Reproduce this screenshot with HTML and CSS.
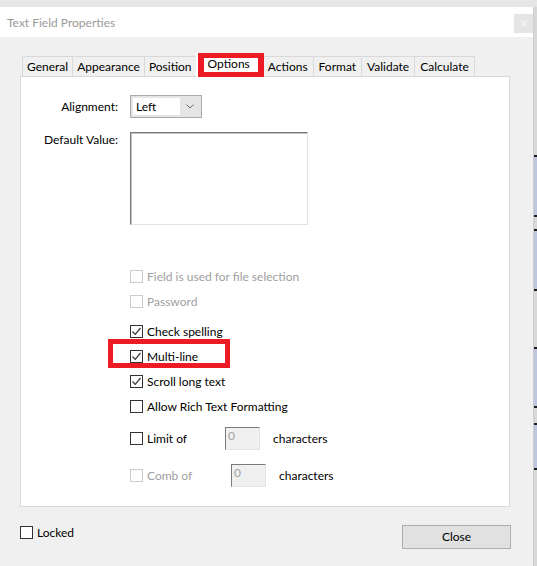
FILE: index.html
```html
<!DOCTYPE html>
<html lang="en">
<head>
<meta charset="utf-8">
<title>Text Field Properties</title>
<link rel="stylesheet" href="styles.css">
</head>
<body>
<div class="screen">
  <div class="dialog">
    <div class="titlebar">
      <span class="title">Text Field Properties</span>
      <span class="close-x">×</span>
    </div>
    <div class="content">
      <div class="tabs">
        <div class="tab">General</div>
        <div class="tab">Appearance</div>
        <div class="tab">Position</div>
        <div class="tab active">Options<span class="tab-mark"></span></div>
        <div class="tab">Actions</div>
        <div class="tab">Format</div>
        <div class="tab">Validate</div>
        <div class="tab">Calculate</div>
      </div>
      <div class="panel">
        <div class="form-grid">
          <div class="label label-mid">Alignment:</div>
          <div class="select">
            <span class="select-value">Left</span>
            <span class="select-arrow">
              <svg width="8" height="5" viewBox="0 0 8 5"><polyline points="0.5,0.5 4,4 7.5,0.5" fill="none" stroke="#6d6d6d" stroke-width="1"/></svg>
            </span>
          </div>
          <div class="label label-top">Default Value:</div>
          <div class="textarea"></div>
        </div>
        <div class="checks">
          <div class="check-row disabled"><span class="box"></span><span>Field is used for file selection</span></div>
          <div class="check-row disabled"><span class="box"></span><span>Password</span></div>
          <div class="check-row gap-top"><span class="box"><svg width="11" height="11" viewBox="0 0 11 11"><polyline points="1.5,5.5 4.2,8.3 9.5,2" fill="none" stroke="#333" stroke-width="1.2"/></svg></span><span>Check spelling</span></div>
          <div class="check-row"><span class="box"><svg width="11" height="11" viewBox="0 0 11 11"><polyline points="1.5,5.5 4.2,8.3 9.5,2" fill="none" stroke="#333" stroke-width="1.2"/></svg></span><span>Multi-line</span><span class="mark-box"></span></div>
          <div class="check-row"><span class="box"><svg width="11" height="11" viewBox="0 0 11 11"><polyline points="1.5,5.5 4.2,8.3 9.5,2" fill="none" stroke="#333" stroke-width="1.2"/></svg></span><span>Scroll long text</span></div>
          <div class="check-row"><span class="box"></span><span>Allow Rich Text Formatting</span></div>
          <div class="check-row limit-row">
            <span class="box"></span><span class="inline-label limit-label">Limit of</span>
            <span class="num-input">0</span><span class="unit">characters</span>
          </div>
          <div class="check-row comb-row">
            <span class="box disabled-box"></span><span class="inline-label comb-label disabled-text">Comb of</span>
            <span class="num-input">0</span><span class="unit">characters</span>
          </div>
        </div>
      </div>
      <div class="footer">
        <div class="check-row locked"><span class="box"></span><span>Locked</span></div>
        <div class="button">Close</div>
      </div>
    </div>
  </div>
  <div class="side">
    <div class="side-block b1"></div>
    <div class="side-block b2"></div>
    <div class="side-block b3"></div>
    <div class="side-block b4"></div>
  </div>
</div>
</body>
</html>
```

FILE: styles.css
```css
* { box-sizing: border-box; }

body {
  margin: 0;
  background: #e6e6e6;
  font-family: Lato, "Noto Sans", sans-serif;
  font-size: 12px;
  color: #000;
}

.screen {
  display: flex;
  height: 566px;
  padding-top: 7px;
  overflow: hidden;
}

.dialog {
  width: 533px;
  height: 559px;
  flex: none;
  background: #f0f0f0;
  display: flex;
  flex-direction: column;
}

.titlebar {
  height: 30px;
  background: #fff;
  display: flex;
  justify-content: space-between;
  align-items: center;
  padding-left: 7px;
}

.title {
  color: #9a9a9a;
  font-size: 12px;
}

.close-x {
  align-self: flex-start;
  margin-top: 7px;
  width: 19px;
  height: 19px;
  background: #e5e5e5;
  color: #f8f8f8;
  font-size: 13px;
  line-height: 18px;
  text-align: center;
}

.content {
  padding: 19px 23px 0 20px;
}

.tabs {
  display: flex;
  align-items: flex-end;
  height: 20px;
  padding-left: 2px;
}

.tab {
  height: 20px;
  border: 1px solid #d9d9d9;
  border-bottom: 0;
  background: #f0f0f0;
  padding: 0 4px;
  display: flex;
  align-items: center;
  margin-left: -1px;
}

.tab:first-child { margin-left: 0; }

.tab.active ~ .tab { padding: 0 5px; }

.tab.active {
  position: relative;
  z-index: 2;
  height: 24px;
  margin-bottom: -1px;
  padding: 0 12px 4px 11px;
  background: #fff;
  border-color: #fff;
}

.tab-mark {
  position: absolute;
  left: 1px;
  right: -2px;
  top: -1px;
  bottom: 0;
  border: 5px solid #ed1c24;
  border-left-width: 6px;
  border-right-width: 6px;
}

.panel {
  width: 490px;
  height: 431px;
  background: #fff;
  border: 1px solid #d9d9d9;
  padding-top: 18px;
}

.form-grid {
  display: grid;
  grid-template-columns: 97px 178px;
  column-gap: 12px;
  row-gap: 14px;
}

.label { text-align: right; }
.label-mid { align-self: center; }
.label-top { line-height: 15px; }

.select {
  width: 72px;
  height: 23px;
  border: 1px solid #a9a9a9;
  background: #e5e5e5;
  display: flex;
  padding: 2px;
}

.select-value {
  flex: 1;
  background: #fff;
  padding-left: 3px;
  line-height: 17px;
}

.select-arrow {
  width: 19px;
  display: flex;
  align-items: center;
  justify-content: center;
}

.textarea {
  width: 178px;
  height: 93px;
  background: #fff;
  border: 1px solid;
  border-color: #7a7a7a #e3e3e3 #e3e3e3 #7a7a7a;
  box-shadow: inset 1px 1px 0 #c4c4c4;
}

.checks {
  padding-left: 109px;
  margin-top: 39px;
}

.check-row {
  position: relative;
  display: flex;
  align-items: center;
  height: 25px;
}

.box {
  width: 13px;
  height: 13px;
  flex: none;
  border: 1px solid #333;
  background: #fff;
  margin-right: 4px;
  display: flex;
  align-items: center;
  justify-content: center;
}

.check-row.disabled { color: #a0a0a0; }
.check-row.disabled .box,
.disabled-box { border-color: #cccccc; }
.disabled-text { color: #a0a0a0; }

.gap-top { margin-top: 5px; }

.mark-box {
  position: absolute;
  left: -22px;
  top: -5px;
  width: 122px;
  height: 29px;
  border: 5px solid #ed1c24;
}

.limit-row { margin-top: 7px; }
.comb-row { margin-top: 12px; }

.inline-label { flex: none; }
.limit-label { width: 78px; }
.comb-label { width: 84px; }

.num-input {
  width: 35px;
  height: 23px;
  background: #f0f0f0;
  border: 1px solid;
  border-color: #7a7a7a #e3e3e3 #e3e3e3 #7a7a7a;
  color: #a0a0a0;
  padding: 1px 0 0 2px;
  line-height: 14px;
  align-self: center;
}

.unit { margin-left: 13px; }

.footer {
  display: flex;
  justify-content: space-between;
  align-items: flex-start;
  padding-top: 18px;
}

.check-row.locked {
  height: 13px;
  margin-top: 1px;
}

.button {
  width: 109px;
  height: 24px;
  margin-right: -1px;
  background: #e1e1e1;
  border: 1px solid #adadad;
  text-align: center;
  line-height: 22px;
}

.side {
  width: 4px;
  flex: none;
  background: #d8d8d8;
  border-left: 1px solid #cfcfcf;
  display: flex;
  flex-direction: column;
}

.side-block {
  background: #bec5de;
  border-top: 2px solid #1e1e1e;
  border-bottom: 2px solid #1e1e1e;
}

.b1 { margin-top: 148px; height: 62px; }
.b2 { margin-top: 12px; height: 62px; }
.b3 { margin-top: 56px; height: 61px; }
.b4 { margin-top: 15px; height: 47px; }
```
